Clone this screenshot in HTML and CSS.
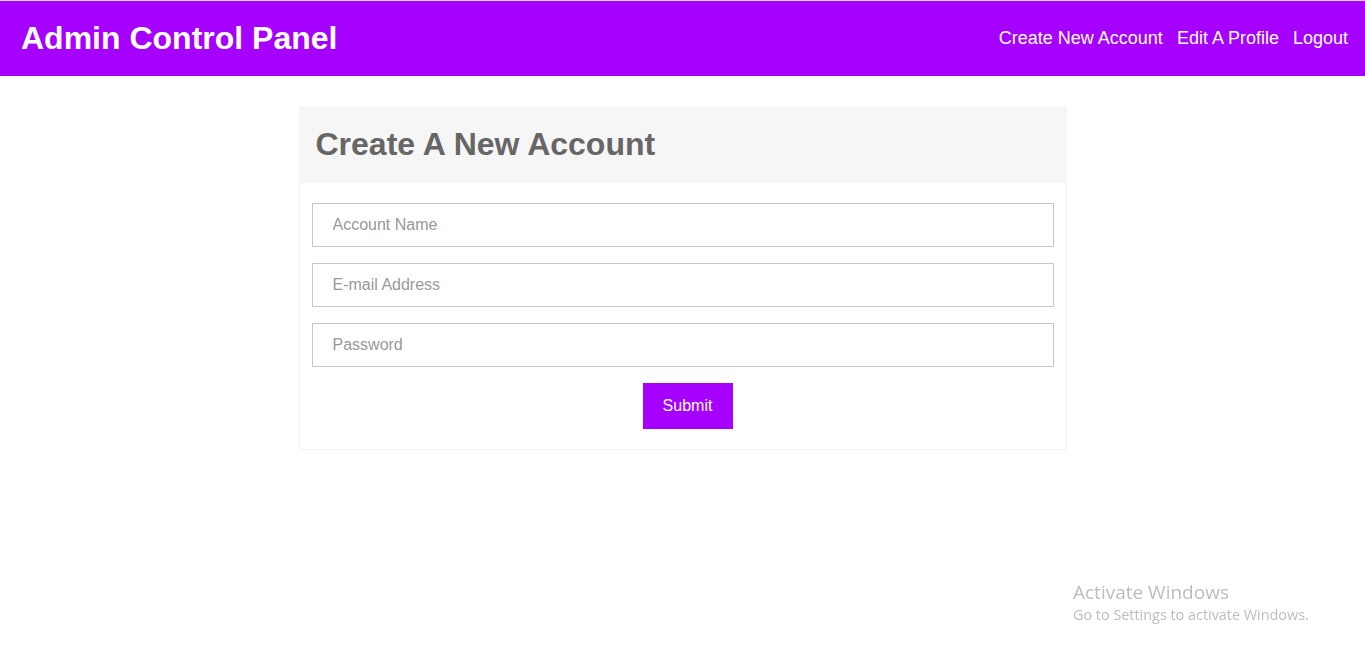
FILE: index.html
```html
<!DOCTYPE html>
<html lang="en">
<head>
<meta charset="utf-8">
<title>Admin Control Panel</title>
<link rel="stylesheet" href="styles.css">
</head>
<body>
<header class="topbar">
  <h1 class="brand">Admin Control Panel</h1>
  <nav class="nav">
    <a href="#">Create New Account</a>
    <a href="#">Edit A Profile</a>
    <a href="#">Logout</a>
  </nav>
</header>
<main class="page">
  <section class="card">
    <div class="card-head">
      <h2 class="card-title">Create A New Account</h2>
    </div>
    <form class="card-body">
      <input class="field" type="text" placeholder="Account Name">
      <input class="field" type="email" placeholder="E-mail Address">
      <input class="field" type="password" placeholder="Password">
      <button class="submit" type="button">Submit</button>
    </form>
  </section>
</main>
<div class="watermark">
  <div class="wm-title">Activate Windows</div>
  <div class="wm-sub">Go to Settings to activate Windows.</div>
</div>
</body>
</html>
```
FILE: styles.css
```css
* { box-sizing: border-box; }
html, body { margin: 0; padding: 0; }
body {
  font-family: "Liberation Sans", Arial, sans-serif;
  background: #fff;
  border-top: 1px solid #d6d6d6;
  min-height: 657px;
}
.topbar {
  height: 75px;
  background: #a600ff;
  display: flex;
  align-items: center;
  justify-content: space-between;
  padding: 0 17px 1px 21px;
}
.brand {
  margin: 0;
  color: #fff;
  font-size: 32px;
  font-weight: bold;
}
.nav {
  display: flex;
  gap: 14px;
}
.nav a {
  color: #fff;
  text-decoration: none;
  font-size: 18px;
}
.page {
  padding-top: 30px;
  display: flex;
  justify-content: center;
}
.card {
  width: 768px;
  border: 1px solid #f2f2f2;
  border-top: none;
}
.card-head {
  background: #f6f6f6;
  height: 77px;
  display: flex;
  align-items: center;
  padding: 0 17px;
  margin: 0 -1px;
}
.card-title {
  margin: 0;
  color: #666;
  font-size: 32px;
  font-weight: bold;
}
.card-body {
  display: flex;
  flex-direction: column;
  align-items: center;
  gap: 16px;
  padding: 20px 12px 20px;
  margin: 0;
}
.field {
  width: 100%;
  height: 44px;
  border: 1px solid #c8c8c8;
  padding: 0 20px;
  font-family: "Liberation Sans", Arial, sans-serif;
  font-size: 16px;
  color: #333;
  outline: none;
}
.field::placeholder { color: #999; }
.submit {
  width: 90px;
  height: 46px;
  margin-left: 10px;
  background: #a600ff;
  color: #fff;
  border: none;
  font-family: "Liberation Sans", Arial, sans-serif;
  font-size: 16px;
  cursor: pointer;
}
.watermark {
  position: fixed;
  left: 1073px;
  top: 580px;
  color: #bdbdbd;
  font-family: "Open Sans", "Noto Sans", sans-serif;
}
.wm-title { font-size: 19px; line-height: 24px; }
.wm-sub { font-size: 14.4px; line-height: 22px; }
```
